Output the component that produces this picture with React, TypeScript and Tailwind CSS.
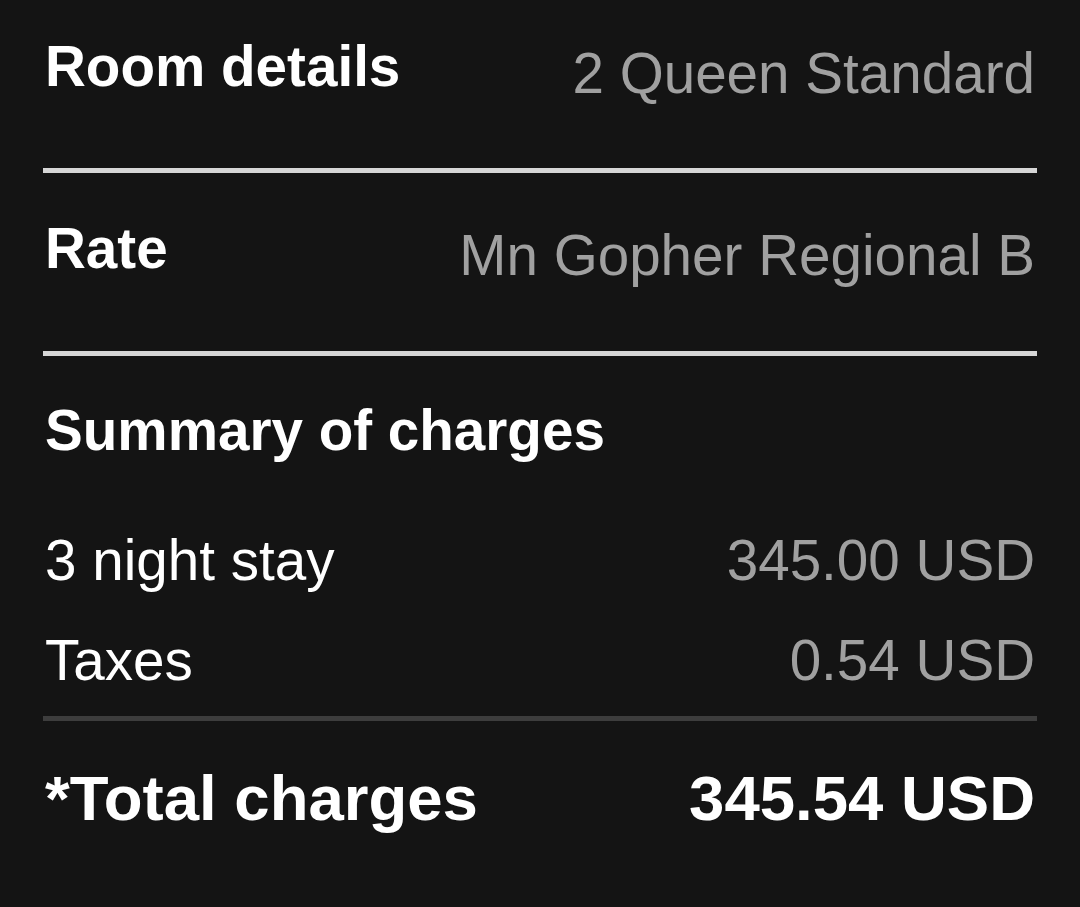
export default function App() {
    return (
        <div className="min-h-[907px] w-full bg-[#141414] px-[43px] pt-[35px] font-['Liberation_Sans',Arial,Helvetica,sans-serif] text-white">
            <div className="flex items-start justify-between px-[2px]">
                <span className="text-[56.6px] font-bold leading-[64px]">Room details</span>
                <span className="mt-[7px] text-[56.6px] leading-[64px] text-[#a0a0a0]">2 Queen Standard</span>
            </div>

            <div className="mt-[62px] h-[5px] bg-[#d6d6d6]" />

            <div className="mt-[44px] flex items-start justify-between px-[2px]">
                <span className="text-[56.6px] font-bold leading-[64px]">Rate</span>
                <span className="mt-[7px] text-[56.6px] leading-[64px] text-[#a0a0a0]">Mn Gopher Regional B</span>
            </div>

            <div className="mt-[63px] h-[5px] bg-[#d6d6d6]" />

            <h2 className="mt-[43px] px-[2px] text-[56.6px] font-bold leading-[64px]">Summary of charges</h2>

            <div className="mt-[66px] flex items-start justify-between px-[2px]">
                <span className="text-[56.6px] leading-[64px]">3 night stay</span>
                <span className="text-[56.6px] leading-[64px] text-[#a0a0a0]">345.00 USD</span>
            </div>

            <div className="mt-[36px] flex items-start justify-between px-[2px]">
                <span className="text-[56.6px] leading-[64px]">Taxes</span>
                <span className="text-[56.6px] leading-[64px] text-[#a0a0a0]">0.54 USD</span>
            </div>

            <div className="mt-[23px] h-[5px] bg-[#3d3d3d]" />

            <div className="mt-[41px] flex items-start justify-between px-[2px]">
                <span className="text-[63.5px] font-bold leading-[72px]">*Total charges</span>
                <span className="text-[63.5px] font-bold leading-[72px]">345.54 USD</span>
            </div>
        </div>
    );
}
